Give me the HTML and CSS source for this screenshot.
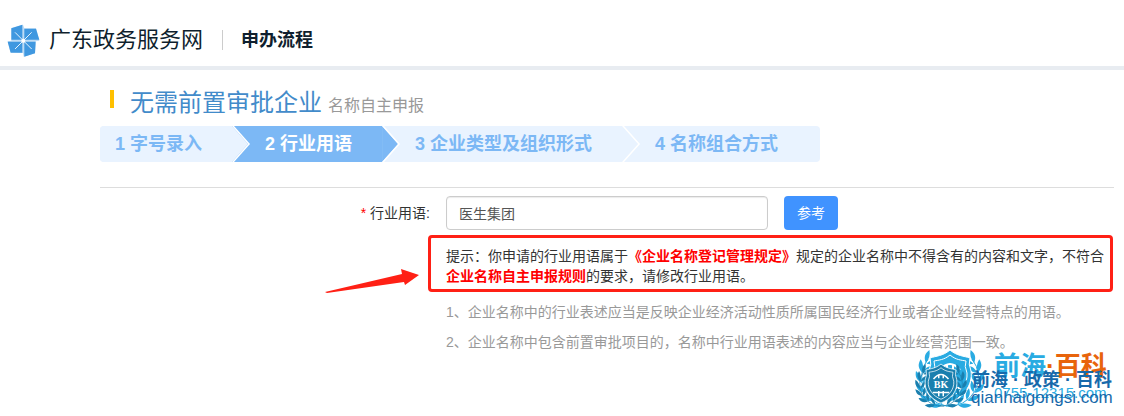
FILE: index.html
```
<!DOCTYPE html>
<html lang="zh-CN">

<head>
  <meta charset="UTF-8">
  <title>广东政务服务网</title>
  <link rel="stylesheet" href="styles.css">
</head>

<body>
  <header class="header">
    <svg class="logo" viewBox="20 25 99 99" aria-hidden="true">
      <path fill="#bfdcf5" d="M33 37L68 27L72 38L107 38L117 75L106 77L104 113L70 123L68 112L30 110L22 77L33 75Z" />
      <g fill="#4098e0">
        <path d="M33 38L66 27V72H33Z" />
        <path d="M72 39H107L117 72H72Z" />
        <path d="M72 78H106L104 113L72 123Z" />
        <path d="M22 78H66V111H31Z" />
      </g>
      <path stroke="#e6f3fd" stroke-width="3" d="M44 50L94 100M94 50L44 100" />
      <circle cx="69" cy="75" r="6" fill="#fff" />
    </svg>
    <span class="site-name">广东政务服务网</span>
    <span class="header-title">申办流程</span>
  </header>

  <main class="container">
    <h1 class="page-title">无需前置审批企业 <small>名称自主申报</small></h1>

    <ol class="steps">
      <li class="step">1 字号录入</li>
      <li class="step active">2 行业用语</li>
      <li class="step">3 企业类型及组织形式</li>
      <li class="step">4 名称组合方式</li>
    </ol>

    <form class="form">
      <label class="form-label" for="industry"><span class="required">*</span> 行业用语:</label>
      <div class="form-control">
        <input type="text" id="industry" name="industry" value="医生集团">
        <button type="button">参考</button>
      </div>

      <div class="tip">
        <svg class="arrow" viewBox="0 0 96 26" aria-hidden="true">
          <path fill="#ff2015" d="M0 24L77 6L76 1L94 7L80 17L79 14L2 25Z" />
        </svg>
        提示：你申请的行业用语属于<b>《企业名称登记管理规定》</b>规定的企业名称中不得含有的内容和文字，不符合<b>企业名称自主申报规则</b>的要求，请修改行业用语。
      </div>

      <div class="notes">
        <p>1、企业名称中的行业表述应当是反映企业经济活动性质所属国民经济行业或者企业经营特点的用语。</p>
        <p>2、企业名称中包含前置审批项目的，名称中行业用语表述的内容应当与企业经营范围一致。</p>
      </div>
    </form>
  </main>

  <svg class="watermark" viewBox="0 0 214 70">
    <defs>
      <g id="branch">
        <path fill="none" stroke="currentColor" stroke-width="1" d="M4 28A29 29 0 0 1 -22 -19" />
        <g fill="currentColor">
          <path id="leaf" d="M-28 5C-34 2 -35 -2 -34 -7C-30 -4 -28 0 -28 5ZM-27 5C-27 0 -25 -3 -21 -5C-21 0 -23 3 -27 5Z" />
          <use href="#leaf" transform="rotate(21)" />
          <use href="#leaf" transform="rotate(42)" />
          <use href="#leaf" transform="rotate(-21)" />
          <use href="#leaf" transform="rotate(-42)" />
          <use href="#leaf" transform="rotate(-63)" />
        </g>
      </g>
      <g id="emblem">
        <use href="#branch" />
        <use href="#branch" transform="scale(-1 1)" />
        <path fill="currentColor" stroke="#fff" d="M0 -28C7 -22 14 -22 20 -20Q18 -14 21 -7C23 8 13 19 0 24C-13 19 -23 8 -21 -7Q-18 -14 -20 -20C-14 -22 -7 -22 0 -28Z" />
        <path fill="none" stroke="#fff" d="M0 -23C6 -18 11 -18 16 -17Q14 -12 17 -5C18 6 10 15 0 19C-10 15 -18 6 -17 -5Q-14 -12 -16 -17C-11 -18 -6 -18 0 -23Z" />
        <path fill="none" stroke="#fff" stroke-width="2" d="M-10 -8Q0 -20 10 -8M-11 10H11M-3 -14V-9M3 -14V-9M-3 8V15M3 8V15" />
      </g>
    </defs>
    <g class="mark-back">
      <use href="#emblem" transform="translate(40 35)" />
      <text class="mark-title" x="84" y="32">前海<tspan class="orange">·百科</tspan></text>
      <text class="mark-phone" x="84" y="55">0755-12315.com</text>
    </g>
    <g class="mark-front">
      <use href="#emblem" transform="translate(31 42) scale(.75)" />
      <text class="mark-bk" x="31" y="45">BK</text>
      <text class="mark-name" x="62" y="43">前海 · 政策 · 百科</text>
      <text class="mark-url" x="61" y="60">qianhaigongsi.com</text>
    </g>
  </svg>
</body>

</html>
```
FILE: styles.css
```
* {
  box-sizing: border-box;
}

body {
  margin: 0;
  background-color: #fff;
  color: #333;
  font-family: "Liberation Sans", "Noto Sans CJK SC", sans-serif;
  font-size: 14px;
  line-height: 20px;
}

.header {
  display: flex;
  align-items: center;
  height: 70px;
  padding: 14px 7px 0;
  border-bottom: 4px solid #e8ecf1;
  color: #0f1f2e;
}

.logo {
  width: 33px;
  height: 33px;
}

.site-name {
  margin-left: 9px;
  font-size: 22px;
}

.header-title {
  margin-left: 19px;
  padding-left: 18px;
  border-left: 1px solid #ccc;
  font-size: 18px;
  font-weight: bold;
}

.container {
  margin: 0 10px 0 100px;
  padding-top: 20px;
}

.page-title {
  display: flex;
  align-items: baseline;
  gap: 6px;
  margin: 0 0 7px 10px;
  color: #428bca;
  font-size: 24px;
  font-weight: normal;
  line-height: 26px;
}

.page-title::before {
  content: "";
  align-self: flex-start;
  width: 4px;
  height: 18px;
  margin-right: 10px;
  background-color: #ffc000;
}

.page-title small {
  color: #999;
  font-size: 16px;
}

.steps {
  display: flex;
  max-width: 720px;
  margin: 0 0 25px;
  padding: 0;
  border-radius: 4px;
  background-color: #e9f3ff;
  list-style: none;
}

.step {
  position: relative;
  padding: 0 30px 0 33px;
  background-color: #e9f3ff;
  color: #7cb8f5;
  font-size: 18px;
  font-weight: bold;
  line-height: 36px;
  white-space: nowrap;
}

.step:first-child {
  padding-left: 15px;
  border-radius: 4px 0 0 4px;
}

.step:last-child {
  border-radius: 4px;
}

.step.active {
  background-color: #7cb8f5;
  color: #fff;
}

/* arrow head and its white edge */
.step:not(:last-child)::before,
.step:not(:last-child)::after {
  content: "";
  position: absolute;
  z-index: 1;
  top: 0;
  left: 100%;
  width: 16px;
  height: 100%;
  background-color: inherit;
  clip-path: polygon(0 0, 100% 50%, 0 100%);
}

.step:not(:last-child)::after {
  width: 18px;
  background-color: #fff;
  clip-path: polygon(0 0, 2px 0, 100% 50%, 2px 100%, 0 100%, 16px 50%);
}

.form {
  display: grid;
  grid-template-columns: 330px 1fr;
  column-gap: 16px;
  padding-top: 8px;
  border-top: 1px solid #ddd;
}

.form-label {
  line-height: 34px;
  text-align: right;
}

.required {
  color: #f00;
}

.form-control {
  display: flex;
  gap: 16px;
}

.form-control input {
  width: 322px;
  height: 34px;
  padding: 0 12px;
  border: 1px solid #ccc;
  border-radius: 4px;
  box-shadow: inset 0 1px 1px rgba(0, 0, 0, 0.08);
  color: #555;
  font: inherit;
}

.form-control button {
  padding: 0 13px;
  border: none;
  border-radius: 4px;
  background-color: #4093ff;
  color: #fff;
  font: inherit;
  cursor: pointer;
}

.tip {
  position: relative;
  grid-column: 2;
  margin: 5px 1px 0 -18px;
  padding: 8px 4px 3px 15px;
  border: 3px solid #ff2015;
  border-radius: 4px;
}

.tip b {
  color: #f00;
}

.arrow {
  position: absolute;
  right: 100%;
  top: 30px;
  width: 96px;
  margin-right: 10px;
}

.notes {
  grid-column: 2;
  padding-top: 5px;
  color: #999;
}

.notes p {
  margin: 0;
  line-height: 30px;
}

.watermark {
  position: absolute;
  right: 0;
  top: 343px;
  width: 214px;
}

.mark-back {
  color: #29abe2;
  fill: #29abe2;
}

.mark-front {
  color: #1a7fae;
  fill: #1769aa;
}

.mark-title {
  font-size: 26px;
  font-weight: bold;
}

.orange {
  fill: #e8640c;
}

.mark-phone {
  font-size: 15px;
}

.mark-bk {
  fill: #fff;
  font-family: "Liberation Serif", serif;
  font-size: 10px;
  font-weight: bold;
  text-anchor: middle;
}

.mark-name {
  font-size: 18px;
  font-weight: bold;
}

.mark-url {
  font-size: 17px;
}
```
